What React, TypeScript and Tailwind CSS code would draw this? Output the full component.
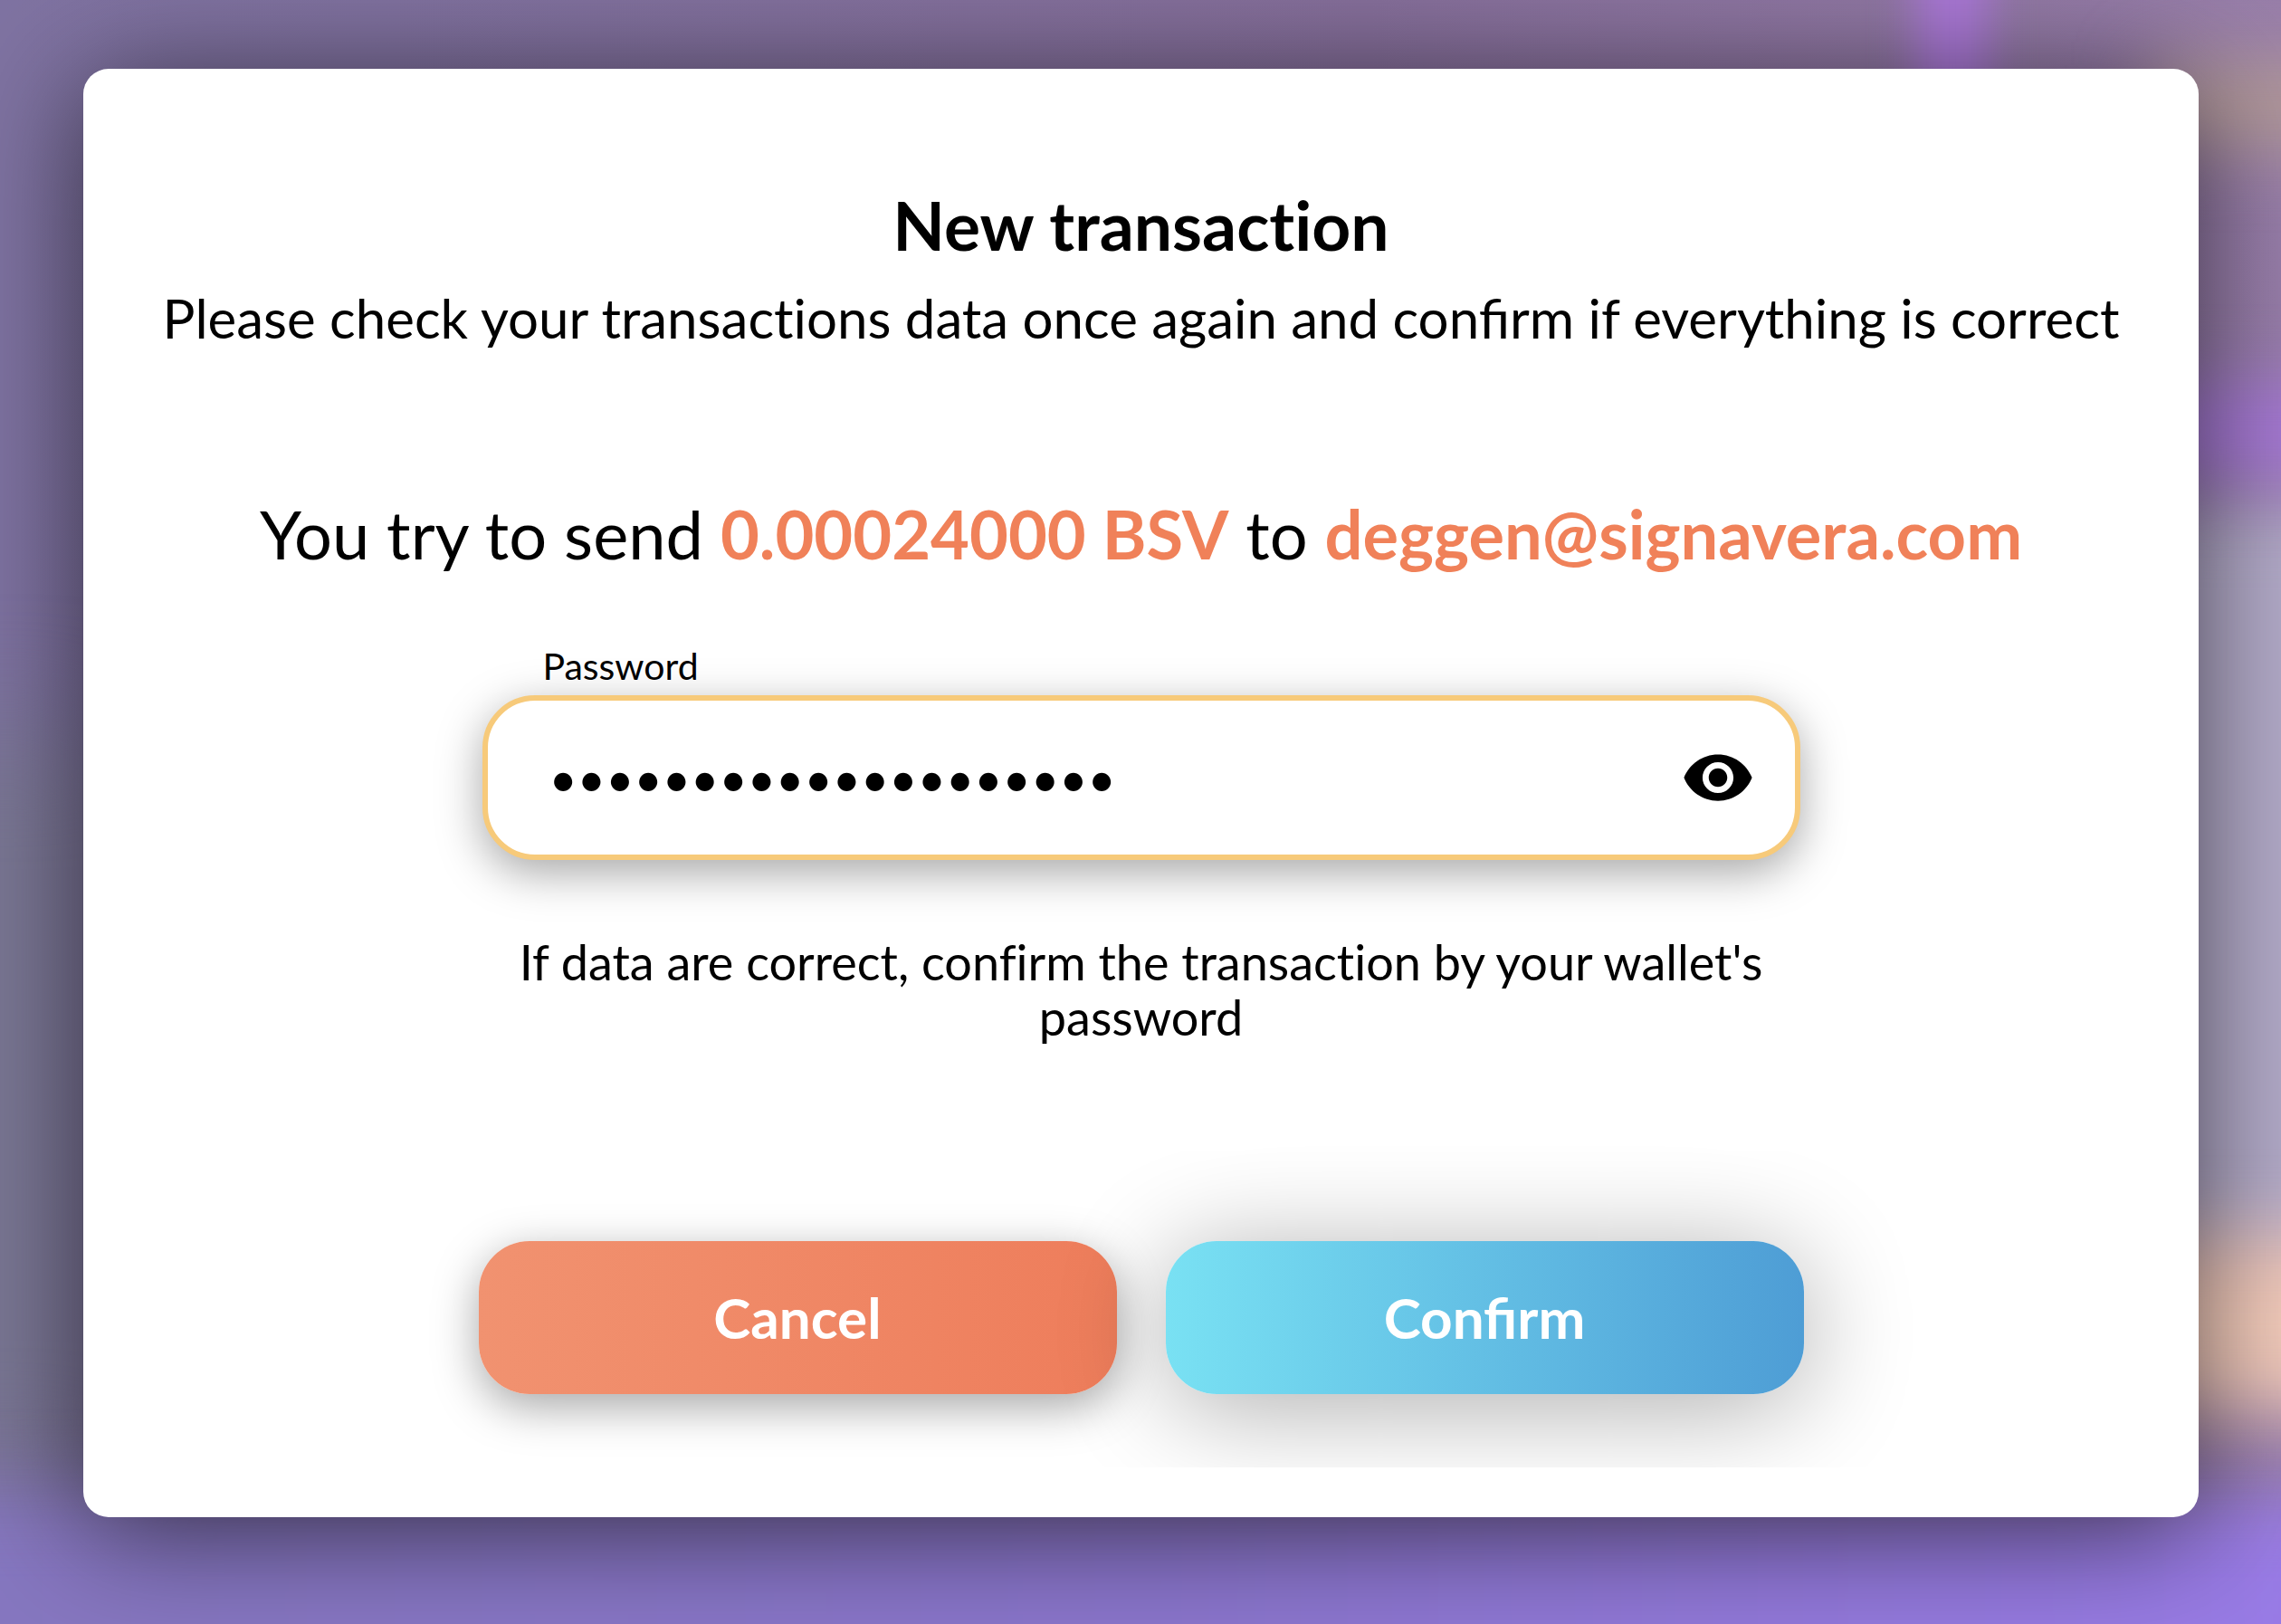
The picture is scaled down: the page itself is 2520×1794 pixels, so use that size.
import { useState } from "react";
import { MdVisibility, MdVisibilityOff } from "react-icons/md";

function Backdrop() {
  return (
    <div
      aria-hidden="true"
      className="absolute inset-0 overflow-hidden bg-linear-to-r from-[#7f73a2] from-0% via-[#866f9b] via-60% to-[#987eaa] to-100%"
    >
      <div className="absolute -left-24 top-[45%] h-[46%] w-52 bg-[#7b7894] blur-3xl" />
      <div className="absolute -right-24 top-[31%] h-[48%] w-60 bg-[#b3abc9] blur-2xl" />
      <div className="absolute -bottom-24 -left-24 -right-24 h-60 bg-linear-to-r from-[#8677bf] via-[#8b76cd] to-[#9a7ce8] blur-2xl" />
      <div className="absolute -right-24 top-[24%] h-[5%] w-60 bg-[#a877dd] blur-2xl" />
      <div className="absolute -right-24 top-[4%] h-[5%] w-60 bg-[#b59c98] blur-2xl" />
      <div className="absolute -right-24 top-[76%] h-[11%] w-64 bg-[#f3cbbb] blur-2xl" />
      <div className="absolute left-[84%] -top-16 h-48 w-20 bg-[#ab78d8] blur-xl" />
    </div>
  );
}

export default function App() {
  const [password, setPassword] = useState("correcthorsebattery1");
  const [visible, setVisible] = useState(false);

  return (
    <div className="relative isolate min-h-screen pr-[91px] pl-[92px] pt-[76px] pb-[119px] font-[Lato,sans-serif] text-black">
      <Backdrop />
      <main className="relative rounded-[28px] bg-white pb-[55px] shadow-[0_16px_130px_rgba(0,0,0,0.6)]">
        <div className="flex flex-col items-center overflow-hidden rounded-t-[28px] px-16 pt-[126px] pb-[81px] text-center">
          <h1 className="text-[75px] leading-[92px] font-bold [font-variant-ligatures:none]">New transaction</h1>
          <p className="mt-[11px] text-[60px] leading-[92px]">
            Please check your <span className="[font-variant-ligatures:none]">transactions</span> data once again and
            confirm if everything is correct
          </p>
          <p className="mt-[147px] text-[74px] leading-[92px]">
            You try to send <strong className="font-bold text-[#f08159]">0.00024000 BSV</strong> to{" "}
            <strong className="font-bold text-[#f08159]">deggen@signavera.com</strong>
          </p>
          <form className="mt-[76px] flex w-full max-w-[1464px] flex-col" onSubmit={(e) => e.preventDefault()}>
            <div className="mx-1 flex flex-col">
              <label htmlFor="password" className="mb-2 self-start pl-[67px] text-[41px] leading-[48px]">
                Password
              </label>
              <div className="flex h-[182px] items-center rounded-[58px] border-6 border-[#f7ca7a] bg-white pr-[44px] pl-[68px] shadow-[0_14px_50px_rgba(0,0,0,0.35)]">
                <input
                  id="password"
                  type={visible ? "text" : "password"}
                  value={password}
                  onChange={(e) => setPassword(e.target.value)}
                  className="min-w-0 flex-1 bg-transparent text-[54px] outline-none"
                />
                <button
                  type="button"
                  aria-label={visible ? "Hide password" : "Show password"}
                  onClick={() => setVisible(!visible)}
                >
                  {visible ? <MdVisibilityOff size={82} /> : <MdVisibility size={82} />}
                </button>
              </div>
            </div>
            <p className="mt-[82px] px-6 text-[54px] leading-[61px] [font-variant-ligatures:none]">
              If data are correct, confirm the transaction by your wallet's password
            </p>
            <div className="mt-[217px] grid grid-cols-2 gap-[54px]">
              <button
                type="button"
                className="h-[169px] rounded-[56px] bg-linear-to-r from-[#f19270] to-[#ee7d5b] text-[62px] font-bold text-white shadow-[0_14px_50px_rgba(0,0,0,0.35)]"
              >
                Cancel
              </button>
              <button
                type="submit"
                className="h-[169px] rounded-[56px] bg-linear-to-r from-[#79e1f3] to-[#4e9dd5] text-[62px] font-bold text-white shadow-[0_14px_120px_rgba(0,0,0,0.33)]"
              >
                Confirm
              </button>
            </div>
          </form>
        </div>
      </main>
    </div>
  );
}
